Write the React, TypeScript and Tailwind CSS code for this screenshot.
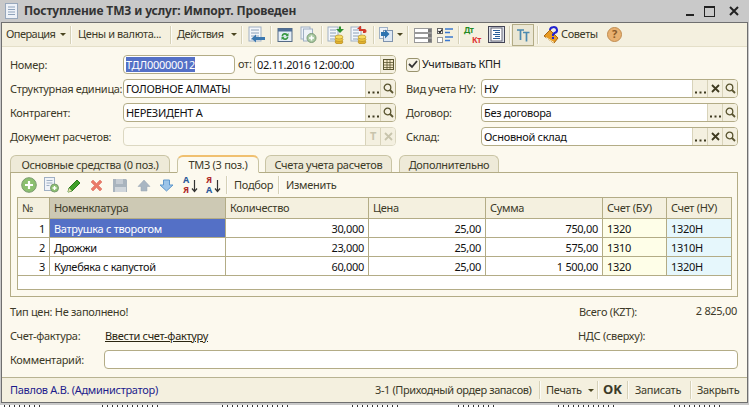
import React from "react";

const Sep = ({ cls = "h-[18px]" }: { cls?: string }) => <div className={`w-[2px] shrink-0 border-l border-[#d6d1b8] bg-white/70 ${cls}`} />;
const Caret = () => <span className="inline-block w-0 h-0 border-l-[3px] border-r-[3px] border-t-[3px] border-l-transparent border-r-transparent border-t-[#4a4520]" />;

const Ico = ({ w = 18, h = 18, children }: { w?: number; h?: number; children: React.ReactNode }) => (
  <svg width={w} height={h} viewBox={`0 0 ${w} ${h}`} className="shrink-0 block">{children}</svg>
);

const Doc = ({ x = 1, y = 1, w = 11, h = 15 }: { x?: number; y?: number; w?: number; h?: number }) => (
  <g>
    <rect x={x} y={y} width={w} height={h} fill="#f4f7fb" stroke="#9fb0c4" />
    <path d={`M${x + 2} ${y + 3}h${w - 4}M${x + 2} ${y + 6}h${w - 4}M${x + 2} ${y + 9}h${w - 4}M${x + 2} ${y + 12}h${w - 4}`} stroke="#8ca0b8" />
  </g>
);
const Coins = ({ x = 10, y = 10 }: { x?: number; y?: number }) => (
  <g>
    <ellipse cx={x + 4} cy={y + 7} rx="4" ry="2" fill="#e0b030" stroke="#b08820" strokeWidth=".6" />
    <ellipse cx={x + 4} cy={y + 4.5} rx="4" ry="2" fill="#f0c840" stroke="#b08820" strokeWidth=".6" />
    <ellipse cx={x + 4} cy={y + 2} rx="4" ry="2" fill="#f8dc60" stroke="#b08820" strokeWidth=".6" />
  </g>
);
const Mag = () => (
  <svg width="11" height="11" viewBox="0 0 11 11"><circle cx="4.5" cy="4.5" r="3.3" fill="none" stroke="#5a5530" strokeWidth="1.3" /><path d="M7 7l3 3" stroke="#5a5530" strokeWidth="1.8" /></svg>
);
const XMark = ({ c = "#3f3a20" }: { c?: string }) => (
  <svg width="9" height="9" viewBox="0 0 9 9"><path d="M1 1l7 7M8 1L1 8" stroke={c} strokeWidth="1.8" /></svg>
);
const Dots = ({ c = "#3f3a20" }: { c?: string }) => (
  <svg width="11" height="11" viewBox="0 0 11 11"><path d="M0 9.5h2M4.500 9.5h2M9 9.5h2" stroke={c} strokeWidth="2" /></svg>
);

const FBtn = ({ children }: { children: React.ReactNode }) => (
  <div className="w-[15px] h-full flex items-center justify-center border-l border-[#d8d3ba] bg-[#f4f0e0]">{children}</div>
);

const Input = ({ w, text, btns, disabled, sel }: { w: string; text?: string; btns?: React.ReactNode; disabled?: boolean; sel?: boolean }) => (
  <div className={`${w} h-[19px] shrink-0 flex rounded-[4px] border overflow-hidden ${disabled ? "border-[#dcd8c2] bg-[#fdfbf3]" : "border-[#b3ac86] bg-white"}`}>
    <div className="flex-1 pl-[2px] leading-[17px] truncate text-[#111]">
      {sel ? <span className="bg-[#5470c6] text-white">{text}</span> : text}
    </div>
    {btns}
  </div>
);

const Label = ({ w, children }: { w: string; children: React.ReactNode }) => (
  <div className={`${w} shrink-0 leading-[19px] text-[#3c3a28] whitespace-nowrap`}>{children}</div>
);

const cols = ["w-[32px]", "w-[176px]", "w-[143px]", "w-[117px]", "w-[117px]", "w-[64px]", "w-[64px]"];
const head = ["№", "Номенклатура", "Количество", "Цена", "Сумма", "Счет (БУ)", "Счет (НУ)"];
const rows = [
  ["1", "Ватрушка с творогом", "30,000", "25,00", "750,00", "1320", "1320Н"],
  ["2", "Дрожжи", "23,000", "25,00", "575,00", "1310", "1310Н"],
  ["3", "Кулебяка с капустой", "60,000", "25,00", "1 500,00", "1320", "1320Н"],
];
const serif = "[font-family:'Liberation_Serif',serif]";

export default function App() {
  return (
    <div className="w-[749px] h-[407px] bg-[#c9c9c9] overflow-hidden flex flex-col text-[11px] tracking-[-0.3px] [font-family:'Liberation_Sans',Arial,sans-serif]">
      {/* Title bar */}
      <div className="h-[22px] shrink-0 flex items-center pl-[5px] pr-[10px]">
        <Ico w={14} h={17}><rect x=".5" y=".5" width="12" height="15" fill="#eef2f8" stroke="#98a8bc" /><path d="M3 4h7M3 6.500h7M3 9h7M3 11.500h7" stroke="#8fa3bb" /></Ico>
        <div className="ml-[5px] font-bold text-[12px] tracking-[-0.15px] text-[#333] whitespace-nowrap">Поступление ТМЗ и услуг: Импорт. Проведен</div>
        <div className="ml-auto flex items-center gap-[8px]">
          <div className="w-[8px] h-[2px] bg-[#222] mt-[8px] mr-[2px]" />
          <div className="w-[11px] h-[11px] border border-[#222] border-t-2" />
          <div className="ml-[6px]"><svg width="10" height="10" viewBox="0 0 10 10" className="block"><path d="M1 1l8 8M9 1L1 9" stroke="#222" strokeWidth="2" /></svg></div>
        </div>
      </div>

      {/* Window */}
      <div className="w-[747px] ml-[1px] h-[381px] shrink-0 flex flex-col border border-[#6f6f6f] bg-[#fcf9ee] text-[#3c3a28]">
        {/* Toolbar */}
        <div className="h-[24px] shrink-0 bg-[#f4f0df] border-b border-[#e4dfc8] flex items-center pl-[4px] whitespace-nowrap">
          <span className="w-[50px] tracking-[-0.55px]">Операция</span>
          <span className="ml-[4px] mr-[4px] flex"><Caret /></span>
          <Sep />
          <span className="ml-[6px] w-[86px] tracking-[-0.4px]">Цены и валюта...</span>
          <Sep cls="h-[18px] ml-[6px]" />
          <span className="ml-[5px] w-[50px] tracking-[-0.55px]">Действия</span>
          <span className="ml-[4px] mr-[4px] flex"><Caret /></span>
          <Sep />
          {/* doc with arrow */}
          <span className="ml-[5px]"><Ico w={18}>
            <Doc x={1} y={1} w={12} h={14} />
            <path d="M17 11H8V8.500L3.500 12.500L8 16.500V14h9z" fill="#3b78b0" />
          </Ico></span>
          <Sep cls="h-[18px] ml-[4px]" />
          <span className="ml-[5px]"><Ico w={16} h={16}>
            <rect x="1" y="1.500" width="14" height="13" fill="#e4eef8" stroke="#556a85" />
            <rect x="1" y="1.500" width="14" height="3" fill="#4f6f96" />
            <path d="M4.500 9a3.500 3.500 0 0 1 6-2l1-1v3.200H8.300l1-1a2 2 0 0 0-3.300 1zM11.500 10a3.500 3.500 0 0 1-6 2l-1 1V9.800h3.200l-1 1a2 2 0 0 0 3.300-1z" fill="#3c9a46" />
          </Ico></span>
          <span className="ml-[7px]"><Ico w={17} h={18}>
            <rect x="1" y="1" width="9" height="12" fill="#eef2f7" stroke="#9fb0c4" />
            <rect x="3.500" y="3" width="9" height="12" fill="#eef2f7" stroke="#9fb0c4" />
            <circle cx="11.500" cy="12" r="4.500" fill="#a9c9a0" stroke="#7c9a78" />
            <path d="M9 12h5M11.500 9.500v5" stroke="#fff" strokeWidth="1.600" />
          </Ico></span>
          <Sep cls="h-[18px] ml-[4px]" />
          <span className="ml-[4px]"><Ico w={18}>
            <Doc x={1} y={1} w={10} h={14} />
            <path d="M9 3h3V0.500h2V3h3l-4 4z" fill="#2f8f2f" />
            <Coins x={8} y={9} />
          </Ico></span>
          <span className="ml-[5px]"><Ico w={18}>
            <Doc x={1} y={1} w={10} h={14} />
            <path d="M13 7V5H9V3H7l3-3 1 0v3h3a2 2 0 0 1 1 4z" fill="#d23a2a" />
            <Coins x={8} y={9} />
          </Ico></span>
          <Sep cls="h-[18px] ml-[5px]" />
          <span className="ml-[4px]"><Ico w={15} h={17}>
            <rect x=".5" y="1.500" width="8" height="11" fill="#eef2f7" stroke="#9fb0c4" />
            <rect x="4.500" y="4.500" width="9" height="11" fill="#dfe9f4" stroke="#7f93ad" />
            <path d="M2 6h4V3.500L10.500 8 6 12.500V10H2z" fill="#2e73b0" />
          </Ico></span>
          <span className="ml-[3px] mr-[4px] flex"><Caret /></span>
          <Sep />
          <span className="ml-[5px]"><Ico w={19} h={16}>
            <g fill="#fff" stroke="#999"><rect x=".5" y="1.500" width="17" height="4" /><rect x=".5" y="6.500" width="17" height="4" /><rect x=".5" y="11.500" width="17" height="4" /></g>
            <rect x="14" y="2" width="3.500" height="3" fill="#777" /><rect x="14" y="7" width="3.500" height="3" fill="#777" /><rect x="14" y="12" width="3.500" height="3" fill="#777" />
          </Ico></span>
          <span className="ml-[4px]"><Ico w={17} h={16}>
            <rect x=".5" y="1.500" width="5" height="5" fill="#fff" stroke="#666" />
            <path d="M1.500 4l1.500 1.500L5 2.500" stroke="#111" fill="none" strokeWidth="1.200" />
            <rect x=".5" y="10.500" width="5" height="5" fill="#fff" stroke="#999" />
            <path d="M8 2h8M8 5.500h5M8 10h8M8 13.500h5" stroke="#3a78d0" strokeWidth="1.500" />
          </Ico></span>
          <Sep cls="h-[18px] ml-[4px]" />
          <div className={`ml-[4px] w-[17px] flex flex-col font-bold text-[8px] leading-[10px] ${serif}`}>
            <span className="text-[#228a22]">Дт</span>
            <span className="text-[#e03030] text-right">Кт</span>
          </div>
          <span className="ml-[7px]"><Ico w={17} h={17}>
            <rect x=".5" y=".5" width="16" height="16" fill="#dbe0e8" stroke="#445" />
            <rect x="3" y="2" width="11" height="13" fill="#fff" stroke="#667" />
            <path d="M5 4.500h7M7 6.500h5M5 8.500h7M7 10.500h5M5 12.500h7" stroke="#2a5f9a" />
          </Ico></span>
          <Sep cls="h-[18px] ml-[4px]" />
          <div className="ml-[1px] w-[22px] h-[22px] shrink-0 flex items-center justify-center bg-[#ebe7d4] border border-[#b3ac86]">
            <Ico w={14} h={14}>
              <path d="M1 2h7M4.500 2v10M7 4.500h6.500M10.500 4.500v9" stroke="#4a8ab0" strokeWidth="1.700" fill="none" />
            </Ico>
          </div>
          <Sep cls="h-[18px] ml-[3px]" />
          <span className="ml-[4px]"><Ico w={18} h={18}>
            <path d="M1 10l6-6 8 8-4 5z" fill="#e89a20" stroke="#a86510" />
            <path d="M3 11.500l8 5" stroke="#fff3c8" />
            <path d="M7 4a3.500 3 0 1 1 4.500 3L10 8.500V10" fill="none" stroke="#2222d0" strokeWidth="2" />
            <rect x="9" y="11" width="2" height="2" fill="#2222d0" />
          </Ico></span>
          <span className="w-[38px] tracking-[-0.4px]">Советы</span>
          <span className="ml-[8px] w-[15px] h-[15px] rounded-full bg-[#e8b070] border border-[#c08c50] flex items-center justify-center font-bold text-[#8a5a28]">?</span>
        </div>

        {/* Form */}
        <div className="flex-1 flex flex-col pl-[8px] pr-[8px] min-h-0">
          <div className="mt-[8px] flex items-center">
            <Label w="w-[113px]">Номер:</Label>
            <Input w="w-[112px]" text="ТДЛ00000012" sel />
            <span className="ml-[3px] w-[16px]">от:</span>
            <Input w="w-[142px]" text="02.11.2016 12:00:00" btns={
              <FBtn><Ico w={11} h={11}><rect x=".5" y=".5" width="10" height="10" fill="#f4e8c8" stroke="#5a5530" /><path d="M.5 3.500h10M.5 6h10M.5 8.500h10M4 .5v10M7 .5v10" stroke="#5a5530" strokeWidth=".8" /></Ico></FBtn>
            } />
            <span className="ml-[10px] w-[14px] h-[14px] rounded-[3px] border border-[#99936e] bg-[#f6f3e6] flex items-center justify-center">
              <svg width="10" height="9" viewBox="0 0 10 9"><path d="M1 4l3 3 5-6" fill="none" stroke="#333" strokeWidth="1.800" /></svg>
            </span>
            <span className="ml-[2px] text-[#222]">Учитывать КПН</span>
          </div>

          <div className="mt-[5px] flex items-center">
            <Label w="w-[113px]">Структурная единица:</Label>
            <Input w="w-[273px]" text="ГОЛОВНОЕ АЛМАТЫ" btns={<><FBtn><Dots /></FBtn><FBtn><Mag /></FBtn></>} />
            <span className="ml-[10px]"><Label w="w-[75px]">Вид учета НУ:</Label></span>
            <Input w="w-[257px]" text="НУ" btns={<><FBtn><Dots /></FBtn><FBtn><XMark /></FBtn><FBtn><Mag /></FBtn></>} />
          </div>

          <div className="mt-[5px] flex items-center">
            <Label w="w-[113px]">Контрагент:</Label>
            <Input w="w-[273px]" text="НЕРЕЗИДЕНТ А" btns={<><FBtn><Dots /></FBtn><FBtn><Mag /></FBtn></>} />
            <span className="ml-[10px]"><Label w="w-[75px]">Договор:</Label></span>
            <Input w="w-[257px]" text="Без договора" btns={<><FBtn><Dots /></FBtn><FBtn><Mag /></FBtn></>} />
          </div>

          <div className="mt-[5px] flex items-center">
            <Label w="w-[113px]">Документ расчетов:</Label>
            <Input w="w-[273px]" disabled btns={<><FBtn><span className={`font-bold text-[11px] text-[#c8c4ac] ${serif}`}>T</span></FBtn><FBtn><XMark c="#c8c4ac" /></FBtn></>} />
            <span className="ml-[10px]"><Label w="w-[75px]">Склад:</Label></span>
            <Input w="w-[257px]" text="Основной склад" btns={<><FBtn><Dots /></FBtn><FBtn><XMark /></FBtn><FBtn><Mag /></FBtn></>} />
          </div>

          {/* Tabs */}
          <div className="mt-[8px] h-[18px] flex items-end relative z-10 whitespace-nowrap">
            <div className="w-[160px] h-[17px] rounded-t-[6px] border border-b-0 border-[#c9c4a4] bg-[#eeead8] text-center leading-[17px]">Основные средства (0 поз.)</div>
            <div className="ml-[7px] w-[82px] h-[18px] rounded-t-[6px] border border-[#c9c4a4] border-t-2 border-t-[#f0c070] border-b-[#fcf9ee] bg-[#fcf9ee] text-center leading-[16px] mb-[-1px]">ТМЗ (3 поз.)</div>
            <div className="ml-[6px] w-[127px] h-[17px] rounded-t-[6px] border border-b-0 border-[#c9c4a4] bg-[#eeead8] text-center leading-[17px]">Счета учета расчетов</div>
            <div className="ml-[7px] w-[100px] h-[17px] rounded-t-[6px] border border-b-0 border-[#c9c4a4] bg-[#eeead8] text-center leading-[17px]">Дополнительно</div>
          </div>

          {/* Panel */}
          <div className="h-[125px] w-[728px] shrink-0 border border-[#b3ac86] flex flex-col px-[6px]">
            <div className="h-[24px] shrink-0 flex items-center">
              <span className="ml-[4px]"><Ico w={16} h={16}>
                <circle cx="8" cy="8" r="7.300" fill="#8cc070" stroke="#7a9a70" />
                <path d="M4 8h8M8 4v8" stroke="#fff" strokeWidth="2.200" />
              </Ico></span>
              <span className="ml-[7px]"><Ico w={15} h={16}>
                <rect x=".5" y=".5" width="10" height="13" fill="#f0f3f8" stroke="#a0b0c4" />
                <path d="M2.500 3.500h6M2.500 6h6M2.500 8.500h3" stroke="#a0b0c4" />
                <circle cx="10.500" cy="11" r="4" fill="#8cc070" stroke="#7a9a70" />
                <path d="M8.500 11h4M10.500 9v4" stroke="#fff" strokeWidth="1.400" />
              </Ico></span>
              <span className="ml-[8px]"><Ico w={14} h={15}>
                <path d="M1 14l1-4 8-8 3 3-8 8z" fill="#3fa028" stroke="#2a7a1c" />
                <path d="M1 14l1-4 3 3z" fill="#e8e0b0" />
              </Ico></span>
              <span className="ml-[9px]"><Ico w={13} h={13}>
                <path d="M1 3l2-2 3.500 3.500L10 1l2 2-3.500 3.500L12 10l-2 2-3.500-3.500L3 12l-2-2 3.500-3.500z" fill="#ea7a68" stroke="#d86858" strokeWidth=".5" />
              </Ico></span>
              <span className="ml-[9px]"><Ico w={16} h={15}>
                <path d="M1 1h13l1 1v12H1z" fill="#a9b4be" />
                <rect x="4" y="1" width="7" height="5" fill="#c5ccd3" />
                <rect x="3" y="9" width="11" height="5" fill="#d0d6db" />
              </Ico></span>
              <span className="ml-[9px]"><Ico w={14} h={13}>
                <path d="M7 1l6 6.500H10V12H4V7.500H1z" fill="#a9b6c2" stroke="#98a5b2" strokeWidth=".5" />
              </Ico></span>
              <span className="ml-[8px]"><Ico w={15} h={13}>
                <path d="M4.500 1h6v5H14L7.500 12 1 6h3.500z" fill="#9cc4e8" stroke="#5f97cc" />
              </Ico></span>
              <div className={`ml-[9px] w-[17px] h-[20px] relative leading-[10px] text-[9px] font-bold ${serif}`}>
                <div className="text-[#2a5a9a]">A</div>
                <div className="text-[#b02a2a]">Я</div>
                <svg width="7" height="13" viewBox="0 0 7 13" className="absolute left-[8px] top-[5px]"><path d="M3.500 0v11M1 8.500l2.500 3 2.500-3" fill="none" stroke="#333" strokeWidth="1.200" /></svg>
              </div>
              <div className={`ml-[6px] w-[17px] h-[20px] relative leading-[10px] text-[9px] font-bold ${serif}`}>
                <div className="text-[#b02a2a]">Я</div>
                <div className="text-[#2a5a9a]">A</div>
                <svg width="7" height="13" viewBox="0 0 7 13" className="absolute left-[8px] top-[5px]"><path d="M3.500 0v11M1 8.500l2.500 3 2.500-3" fill="none" stroke="#333" strokeWidth="1.200" /></svg>
              </div>
              <Sep cls="h-[18px] ml-[3px]" />
              <span className="ml-[6px] w-[38px]">Подбор</span>
              <Sep cls="h-[18px] ml-[6px]" />
              <span className="ml-[6px]">Изменить</span>
            </div>

            {/* Table */}
            <div className="w-[715px] h-[93px] shrink-0 border border-[#b3ac86] bg-white flex flex-col">
              <div className="flex h-[21px] shrink-0 bg-[#f4f0df]">
                {head.map((h, i) => (
                  <div key={i} className={`${cols[i]} shrink-0 border-r border-b border-[#b3ac86] last:border-r-0 pl-[4px] leading-[20px] whitespace-nowrap ${i === 1 ? "bg-[#cdc9b4]" : ""}`}>{h}</div>
                ))}
              </div>
              {rows.map((r, ri) => (
                <div key={ri} className="flex h-[19px] shrink-0 text-[#111]">
                  {r.map((c, i) => {
                    const right = i === 0 || i === 2 || i === 3 || i === 4;
                    const bg = i === 1 && ri === 0 ? "bg-[#5470c6] text-white" : i === 5 ? "bg-[#fefee8]" : i === 6 ? "bg-[#e6f7fc]" : "bg-white";
                    return (
                      <div key={i} className={`${cols[i]} shrink-0 border-r border-b border-[#b3ac86] last:border-r-0 leading-[19px] whitespace-nowrap ${right ? "text-right pr-[4px]" : "pl-[4px]"} ${bg}`}>{c}</div>
                    );
                  })}
                </div>
              ))}
            </div>
          </div>

          {/* Bottom */}
          <div className="mt-[7px] h-[16px] flex items-center justify-between">
            <span className="leading-[16px]">Тип цен: Не заполнено!</span>
            <div className="flex items-center mr-[2px]">
              <span className="w-[110px]">Всего (KZT):</span>
              <span className="w-[48px] text-right mb-[2px]">2 825,00</span>
            </div>
          </div>
          <div className="mt-[8px] h-[16px] flex items-center">
            <span className="w-[95px]">Счет-фактура:</span>
            <span className="underline w-[473px] text-[#2a2510]">Ввести счет-фактуру</span>
            <span>НДС (сверху):</span>
          </div>
          <div className="mt-[6px] flex items-center">
            <Label w="w-[94px]">Комментарий:</Label>
            <Input w="w-[634px]" />
          </div>
        </div>

        {/* Status bar */}
        <div className="h-[25px] shrink-0 bg-[#f4f0df] border-t border-[#b8b392] flex items-center pl-[8px] whitespace-nowrap">
          <span className="w-[365px] text-[#1c1c8c]">Павлов А.В. (Администратор)</span>
          <span className="w-[158px] tracking-[-0.4px]">3-1 (Приходный ордер запасов)</span>
          <Sep cls="h-[18px] ml-[6px]" />
          <span className="ml-[5px] w-[37px]">Печать</span>
          <span className="ml-[5px] mr-[3px] flex"><Caret /></span>
          <Sep />
          <span className="ml-[4px] w-[19px] font-bold text-[13px] tracking-normal">OK</span>
          <Sep cls="h-[18px] ml-[5px]" />
          <span className="ml-[6px] w-[48px]">Записать</span>
          <Sep cls="h-[18px] ml-[7px]" />
          <span className="ml-[5px]">Закрыть</span>
        </div>
      </div>

      {/* Page behind the window */}
      <div className="mt-[2px] h-[2px] shrink-0 bg-white flex gap-[60px] pl-[4px]">
        {[38, 60, 70, 46, 40, 56, 50, 30, 62, 44].map((w, i) => (
          <div key={i} style={{ width: w }} className="h-full shrink-0 [background:repeating-linear-gradient(90deg,#333_0,#333_1px,transparent_1px,transparent_5px)]" />
        ))}
      </div>
    </div>
  );
}
